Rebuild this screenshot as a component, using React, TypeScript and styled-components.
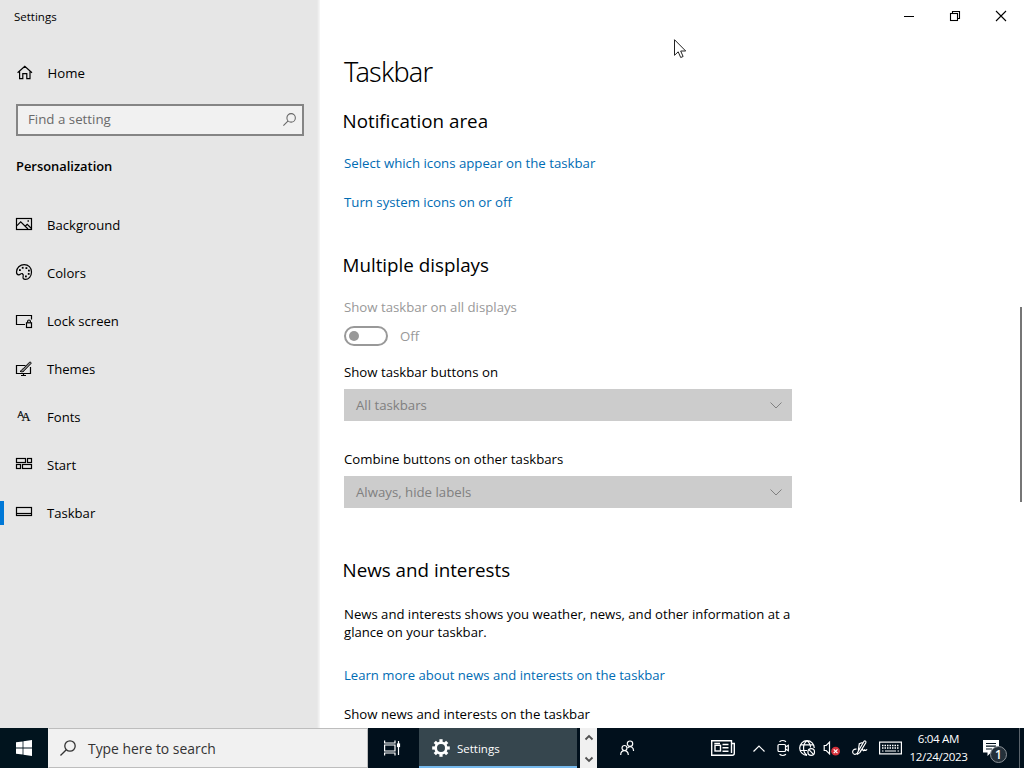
import React, { ReactNode } from 'react';
import styled, { createGlobalStyle } from 'styled-components';

const GlobalStyle = createGlobalStyle`
  * {
    box-sizing: border-box;
  }

  body {
    margin: 0;
    overflow: hidden;
    background: #fff;
    color: #000;
    font-family: 'Open Sans', 'Noto Sans', sans-serif;
    font-size: 13.22px;
  }

  button,
  input {
    padding: 0;
    border: 0;
    background: none;
    color: inherit;
    font: inherit;
  }

  h1,
  h2,
  h3,
  p {
    margin: 0;
    font-weight: 400;
  }

  svg {
    display: block;
    flex: none;
    overflow: visible;
  }
`;

interface IconProps {
  width?: number;
  height?: number;
  stroke?: number;
  children: ReactNode;
}

function Icon({ width = 16, height = 16, stroke = 1, children }: IconProps) {
  return (
    <svg
      width={width}
      height={height}
      viewBox={`0 0 ${width} ${height}`}
      fill="none"
      stroke="currentColor"
      strokeWidth={stroke}
    >
      {children}
    </svg>
  );
}

const HomeIcon = () => (
  <Icon stroke={1.2}>
    <path d="M1.6 8.8 8.8 2.2 16 8.8M3.6 7.2V14.6H6.8V9.7H10.8V14.6H14V7.2" />
  </Icon>
);

const BackgroundIcon = () => (
  <Icon stroke={1.2}>
    <rect x="0.5" y="2.5" width="15" height="11" />
    <path d="M1 9.6 4.7 5.8 12 13M9.2 10.2 11.2 8.3 15.2 12.2" />
    <path d="M11.5 5h1.4" strokeWidth="1.3" />
  </Icon>
);

const ColorsIcon = () => (
  <Icon stroke={1.2}>
    <path d="M8.2.6C12.4.6 15.5 3.7 15.5 8s-2.8 7.4-6.2 7.4c-1.9 0-2.6-1-2.2-2.5.4-1.4.3-2.7-.8-3.3C5 9 4.3 11 2.7 10.8 1.2 10.6.5 9.4.5 7.9.5 3.8 4 .6 8.2.6Z" />
    <g fill="currentColor" stroke="none">
      <rect x="3" y="5.2" width="1.8" height="1.8" />
      <rect x="5.8" y="2.9" width="1.8" height="1.8" />
      <rect x="9.5" y="3.2" width="1.8" height="1.8" />
      <rect x="12" y="5.7" width="1.8" height="1.8" />
      <rect x="11.8" y="9" width="1.8" height="1.8" />
      <rect x="9" y="11.5" width="1.8" height="1.8" />
    </g>
  </Icon>
);

const LockScreenIcon = () => (
  <Icon stroke={1.2}>
    <path d="M9 12.500H.5V3.500H15.500V7.500" />
    <rect x="10.5" y="10.8" width="5" height="4.7" />
    <path d="M11.6 10.500V9.400a1.400 1.400 0 0 1 2.800 0v1.100" />
  </Icon>
);

const ThemesIcon = () => (
  <Icon stroke={1.2}>
    <path d="M9.500 5.500H.5v8H14.500V7M7.500 13.500v2M5 15.500h5" />
    <path
      d="M13.500 2.200 7 8.900c-1.300.2-1.600 2.200-2.900 2.500 1.500.8 4.100.4 4.400-1.100L15 3.500c.5-.8-.7-1.900-1.500-1.300Z"
      fill="#8a8a8a"
      strokeWidth="1"
    />
  </Icon>
);

const FontsIcon = () => (
  <Icon>
    <g fill="currentColor" stroke="currentColor" strokeWidth="0.2">
      <text x="1.4" y="9.8" fontFamily="Open Sans" fontSize="9.8">
        A
      </text>
      <text x="5.6" y="13.4" fontFamily="Liberation Serif" fontSize="12.5">
        A
      </text>
    </g>
  </Icon>
);

const StartIcon = () => (
  <Icon stroke={1.2}>
    <rect x="0.5" y="2.5" width="9" height="4" />
    <rect x="11.5" y="2.5" width="4" height="4" />
    <rect x="0.5" y="8.5" width="4" height="4" />
    <rect x="6.5" y="8.5" width="9" height="4" />
  </Icon>
);

const TaskbarIcon = () => (
  <Icon stroke={1.2}>
    <rect x="0.5" y="3.5" width="15" height="8" />
    <path d="M.5 9.500h15" />
  </Icon>
);

const SearchIcon = ({ size }: { size: number }) => (
  <svg width={size} height={size} viewBox="0 0 16 16" fill="none" stroke="currentColor" strokeWidth="1.3">
    <circle cx="10" cy="6" r="5.2" />
    <path d="M6.300 9.700.5 15.500" />
  </svg>
);

const DownArrow = () => (
  <Icon width={12} height={7}>
    <path d="m.5.5 5.500 5.500L11.500.5" />
  </Icon>
);

const sections = [
  { label: 'Background', icon: <BackgroundIcon /> },
  { label: 'Colors', icon: <ColorsIcon /> },
  { label: 'Lock screen', icon: <LockScreenIcon /> },
  { label: 'Themes', icon: <ThemesIcon /> },
  { label: 'Fonts', icon: <FontsIcon /> },
  { label: 'Start', icon: <StartIcon /> },
  { label: 'Taskbar', icon: <TaskbarIcon /> },
];

function Sidebar() {
  return (
    <StyledSidebar>
      <WindowTitle>Settings</WindowTitle>
      <HomeLink>
        <HomeIcon />
        Home
      </HomeLink>
      <SearchField>
        <input type="text" placeholder="Find a setting" />
        <SearchIcon size={13} />
      </SearchField>
      <GroupTitle>Personalization</GroupTitle>
      <nav>
        {sections.map(({ label, icon }) => (
          <NavItem key={label} $active={label === 'Taskbar'}>
            {icon}
            {label}
          </NavItem>
        ))}
      </nav>
    </StyledSidebar>
  );
}

function CaptionButtons() {
  return (
    <StyledCaption>
      <button type="button" aria-label="Minimize">
        <Icon width={10} height={10}>
          <path d="M0 5.500h10" />
        </Icon>
      </button>
      <button type="button" aria-label="Restore">
        <Icon width={10} height={10} stroke={1.1}>
          <rect x="0.5" y="2.5" width="7" height="7" />
          <path d="M2.500 2.500v-2h7v7h-2" />
        </Icon>
      </button>
      <button type="button" aria-label="Close">
        <Icon width={10} height={10} stroke={1.1}>
          <path d="m0 0 10 10M10 0 0 10" />
        </Icon>
      </button>
    </StyledCaption>
  );
}

function Content() {
  return (
    <StyledContent>
      <PageTitle>Taskbar</PageTitle>

      <SectionTitle $top={17}>Notification area</SectionTitle>
      <TextLink $top={18}>Select which icons appear on the taskbar</TextLink>
      <TextLink $top={19}>Turn system icons on or off</TextLink>

      <SectionTitle $top={39}>Multiple displays</SectionTitle>
      <Label $top={18} $disabled>
        Show taskbar on all displays
      </Label>
      <ToggleRow>
        <Toggle />
        Off
      </ToggleRow>
      <Label $top={16}>Show taskbar buttons on</Label>
      <Select>
        All taskbars
        <DownArrow />
      </Select>
      <Label $top={28}>Combine buttons on other taskbars</Label>
      <Select>
        Always, hide labels
        <DownArrow />
      </Select>

      <SectionTitle $top={48}>News and interests</SectionTitle>
      <Description>
        News and interests shows you weather, news, and other information at a
        <br />
        glance on your taskbar.
      </Description>
      <TextLink $top={24} $size={13.12}>
        Learn more about news and interests on the taskbar
      </TextLink>
      <Label $top={19}>Show news and interests on the taskbar</Label>
    </StyledContent>
  );
}

// eight square teeth round a thick ring
const GearIcon = () => (
  <Icon width={18} height={18}>
    <circle cx="9" cy="9" r="5.3" strokeWidth="2.6" />
    <g strokeWidth="3.2">
      {[0, 45, 90, 135, 180, 225, 270, 315].map((angle) => (
        <path key={angle} d="M9 .2v3" transform={`rotate(${angle} 9 9)`} />
      ))}
    </g>
  </Icon>
);

function DesktopTaskbar() {
  return (
    <StyledTaskbar>
      <StartButton type="button" aria-label="Start menu">
        <svg width="16" height="16" viewBox="0 0 16 16" fill="#fff">
          <path d="M0 2.300 6.600 1.400V7.600H0ZM7.400 1.300 16 0V7.600H7.400ZM0 8.400H6.600V14.600L0 13.700ZM7.400 8.400H16V16L7.400 14.700Z" />
        </svg>
      </StartButton>
      <TaskbarSearch>
        <SearchIcon size={16} />
        Type here to search
      </TaskbarSearch>
      <TaskViewButton $width={51}>
        <Icon stroke={1.2}>
          <path d="M.6.5v2.500h10.400V.5M.6 15.500V13h10.400v2.500M.6 5h10.400v6H.6Z" />
          <path d="M14.500 1v14" />
          <rect x="13.5" y="4" width="2" height="2.500" fill="currentColor" />
        </Icon>
      </TaskViewButton>
      <AppButton>
        <GearIcon />
        Settings
      </AppButton>
      <TaskScroller>
        <Icon width={8} height={5} stroke={1.8}>
          <path d="M.5 4.500 4 1l3.500 3.500" />
        </Icon>
        <Icon width={8} height={5} stroke={1.8}>
          <path d="M.5.5 4 4 7.500.5" />
        </Icon>
      </TaskScroller>
      <TrayButton $width={60}>
        <Icon width={14} height={16} stroke={1.2}>
          <circle cx="4.5" cy="8" r="2.5" />
          <path d="M.7 15c0-5.800 7.600-5.800 7.600 0" />
          <circle cx="10" cy="3.7" r="2.7" />
          <path d="M7.600 7.900c2.800-2.600 6-.8 6 3.100" />
        </Icon>
      </TrayButton>
      <Tray>
        <TrayButton $width={48}>
          <Icon width={24} height={16} stroke={1.4}>
            <path d="M20.500 13V.7H.7v14.600h20.600c1.300 0 2-.7 2-2V3.500h-2.800" />
            <rect x="4" y="5.300" width="5.500" height="5.700" />
            <path d="M3.300 3.500H9M11.500 4.500H17.500M11.500 7.800H17.500M11.500 11.200H17.500" />
          </Icon>
        </TrayButton>
        <TrayButton $width={24}>
          <Icon width={12} height={7} stroke={1.2}>
            <path d="M.5 6.500 6 1l5.500 5.500" />
          </Icon>
        </TrayButton>
        <TrayButton $width={24}>
          <Icon width={12} height={16} stroke={1.2}>
            <rect x="1" y="4.500" width="7.500" height="7" rx="1" />
            <path d="M8.500 7 11.300 5.300v5.400L8.500 9M2.500 1.800c2-1.600 4.500-1.600 6.500 0M2.500 14.200c2 1.600 4.500 1.600 6.500 0" />
          </Icon>
        </TrayButton>
        <TrayButton $width={23}>
          <Icon stroke={1.2}>
            <path d="M15.300 8A7.300 7.300 0 1 0 8 15.300M8 .7C3.400 4 3.400 12 8 15.300M8 .7c2.600 2 3.500 4.300 3.600 6.800M1.500 4.800h13M.8 10.500H8" />
            <circle cx="12.2" cy="12" r="3.3" />
            <path d="m9.900 9.700 4.600 4.600" />
          </Icon>
        </TrayButton>
        <TrayButton $width={27}>
          <Icon stroke={1.2}>
            <path d="M.2 5.500h2l3.300-3.300v11.600l-3.300-3.300h-2Z" />
            <circle cx="11.6" cy="11.2" r="4.400" fill="#d5303a" stroke="none" />
            <path d="m9.700 9.300 3.800 3.800M13.500 9.300 9.700 13.100" />
          </Icon>
        </TrayButton>
        <TrayButton $width={29}>
          <Icon stroke={1.2}>
            <path d="M4.500 9.200C2 8.500.3 10.500.7 12.500c.4 2.200 3.300 2.400 4.600.5L12 1.300c1-1 2.400.1 1.800 1.400L8 12.400l-3 2M8 12.400c1-3 2.500-3.800 2.800-2.500.3 1.400 1.200.8 2-.5M12.500 9.800c.5 1 1.800.7 2.500-.5M6.300 10.500 7.300 3.800 10.500 2.500" />
          </Icon>
        </TrayButton>
        <TrayButton $width={32}>
          <Icon width={23} height={14} stroke={1.2}>
            <rect x="0.6" y="1.100" width="21.8" height="11.800" />
            <path d="M3 4.500h17M3 7h17" strokeDasharray="1.500 1" strokeWidth="1.4" />
            <path d="M3 10h1.500M6 10h11M18.500 10H20" />
          </Icon>
        </TrayButton>
        <Clock>
          <span>6:04 AM</span>
          <span>12/24/2023</span>
        </Clock>
        <ActionCenter>
          <Icon>
            <path d="M0 0h16v12.500H8L4.500 16v-3.500H0Z" fill="#fff" stroke="none" />
            <path d="M3 3.500h10M3 6.200h10M3 9h6" stroke="#01101c" strokeWidth="1.2" />
          </Icon>
          <Badge>1</Badge>
        </ActionCenter>
        <ShowDesktop />
      </Tray>
    </StyledTaskbar>
  );
}

function App() {
  return (
    <Desktop>
      <GlobalStyle />
      <SettingsWindow>
        <Sidebar />
        <Main>
          <CaptionButtons />
          <ScrollArea>
            <Content />
            <ScrollThumb />
          </ScrollArea>
        </Main>
      </SettingsWindow>
      <DesktopTaskbar />
      <Cursor width="13" height="20" viewBox="0 0 13 20">
        <path d="M.5.7v15.600l3.700-3.500 2.500 5.700 2.400-1-2.400-5.500h5Z" fill="#fff" stroke="#222" />
      </Cursor>
    </Desktop>
  );
}

export default App;

const Desktop = styled.div`
  display: grid;
  grid-template-rows: 728px 40px;
  width: 1024px;
  height: 768px;
  overflow: hidden;
`;

const SettingsWindow = styled.div`
  display: grid;
  grid-template-columns: 320px 1fr;
  min-height: 0;
`;

const StyledSidebar = styled.aside`
  display: flex;
  flex-direction: column;
  background: linear-gradient(to right, #e6e6e6 317px, #f8f8f8 320px);
`;

const WindowTitle = styled.div`
  height: 32px;
  padding-left: 14px;
  font-size: 11.5px;
  line-height: 33px;
`;

const HomeLink = styled.a`
  display: flex;
  align-items: center;
  gap: 15.5px;
  height: 48px;
  margin-top: 17px;
  padding-left: 16px;

  svg {
    margin-top: -2px;
  }
`;

const SearchField = styled.label`
  display: flex;
  align-items: center;
  width: 288px;
  height: 32px;
  margin: 7px 0 0 16px;
  padding: 0 6px 2px 10px;
  border: 2px solid #858585;
  background: #f1f1f1;
  color: #666;

  input {
    flex: 1;
    outline: 0;
    font-size: 13.3px;
  }

  input::placeholder {
    color: #6a6a6a;
    opacity: 1;
  }
`;

const GroupTitle = styled.h3`
  height: 65px;
  padding: 20px 0 0 16px;
  font-size: 12.9px;
  font-weight: 600;
  line-height: 20px;
`;

const NavItem = styled.a<{ $active: boolean }>`
  display: flex;
  align-items: center;
  gap: 15px;
  height: 48px;
  font-size: 13.1px;

  &::before {
    content: '';
    width: 4px;
    height: 24px;
    margin: -1px -3px 0 0;
    background: ${({ $active }) => ($active ? '#0078d7' : 'transparent')};
  }

  svg {
    margin-top: -2px;
  }
`;

const Main = styled.main`
  display: flex;
  flex-direction: column;
  min-height: 0;
`;

const StyledCaption = styled.div`
  display: flex;
  justify-content: flex-end;
  height: 32px;

  button {
    display: grid;
    place-items: center;
    width: 46px;
  }
`;

const ScrollArea = styled.div`
  display: flex;
  justify-content: space-between;
  flex: 1;
  min-height: 0;
  padding-right: 2px;
  overflow: hidden;
`;

const ScrollThumb = styled.div`
  width: 2px;
  height: 195px;
  margin-top: 275px;
  background: #767676;
`;

const StyledContent = styled.div`
  width: 472px;
  padding-left: 24px;
  white-space: nowrap;
`;

const PageTitle = styled.h1`
  margin-top: 22px;
  font-family: 'Noto Sans', 'Open Sans', sans-serif;
  font-size: 27px;
  font-weight: 300;
  line-height: 35px;
  letter-spacing: -0.8px;
  padding-bottom: 1px;
`;

const SectionTitle = styled.h2<{ $top: number }>`
  height: 28px;
  margin: ${({ $top }) => $top}px 0 0 -1.5px;
  font-size: 18.8px;
  line-height: 28px;
`;

const TextLink = styled.a<{ $top: number; $size?: number }>`
  display: block;
  margin-top: ${({ $top }) => $top}px;
  color: #006cb4;
  font-size: ${({ $size = 13.22 }) => $size}px;
  line-height: 20px;
`;

const Label = styled.div<{ $top: number; $disabled?: boolean }>`
  margin-top: ${({ $top }) => $top}px;
  color: ${({ $disabled }) => ($disabled ? '#999' : 'inherit')};
  line-height: 20px;
`;

const ToggleRow = styled.div`
  display: flex;
  align-items: center;
  gap: 12px;
  height: 20px;
  margin-top: 9px;
  color: #999;
  line-height: 22px;
`;

const Toggle = styled.span`
  display: flex;
  align-items: center;
  width: 44px;
  height: 20px;
  padding-left: 3px;
  border: 2px solid #999;
  border-radius: 10px;

  &::before {
    content: '';
    width: 10px;
    height: 10px;
    border-radius: 50%;
    background: #999;
  }
`;

const Select = styled.div`
  display: flex;
  align-items: center;
  justify-content: space-between;
  height: 32px;
  margin-top: 7px;
  padding: 0 10px 0 12px;
  background: #ccc;
  color: #808080;
`;

const Description = styled.p`
  margin-top: 21px;
  font-size: 13.13px;
  line-height: 18px;
`;

const StyledTaskbar = styled.footer`
  display: flex;
  background: #01101c;
  color: #fff;
`;

const StartButton = styled.button`
  display: grid;
  place-items: center;
  width: 48px;
  background: #01141e;
`;

const TaskbarSearch = styled.div`
  display: flex;
  align-items: center;
  gap: 12px;
  width: 320px;
  padding-left: 11px;
  border: 1px solid #bdbdbd;
  border-left-color: #f1f1f1;
  background: #f1f1f1;
  color: #333;
  font-size: 13.9px;
`;

const TrayButton = styled.div<{ $width: number }>`
  display: grid;
  place-items: center;
  width: ${({ $width }) => $width}px;
`;

const TaskViewButton = styled(TrayButton)`
  padding-right: 3px;
`;

const AppButton = styled.div`
  display: flex;
  align-items: center;
  gap: 7px;
  width: 158px;
  padding: 2px 0 0 13px;
  border-bottom: 2px solid #76b9ed;
  background: #36464e;
  font-size: 11.5px;
`;

const TaskScroller = styled.div`
  display: flex;
  flex-direction: column;
  align-items: center;
  justify-content: space-between;
  width: 17px;
  margin-left: 3px;
  padding: 7px 0 6px;
  background: #f0f0f0;
  color: #505050;
`;

const Tray = styled.div`
  display: flex;
  margin-left: auto;
`;

const Clock = styled.div`
  display: flex;
  flex-direction: column;
  align-items: center;
  justify-content: center;
  width: 65px;
  padding-bottom: 1px;
  font-size: 11.6px;
  line-height: 18px;
  letter-spacing: -0.35px;
`;

const ActionCenter = styled.div`
  position: relative;
  width: 48px;
  padding: 12px 0 0 12px;
`;

const Badge = styled.span`
  position: absolute;
  top: 18px;
  left: 19px;
  width: 17px;
  height: 17px;
  border: 1px solid #8b9197;
  border-radius: 50%;
  background: #24303a;
  font-size: 12px;
  font-weight: 600;
  line-height: 15px;
  text-align: center;
`;

const ShowDesktop = styled.div`
  width: 5px;
  border-left: 1px solid #5a636b;
`;

const Cursor = styled.svg`
  position: absolute;
  top: 39px;
  left: 674px;
`;
